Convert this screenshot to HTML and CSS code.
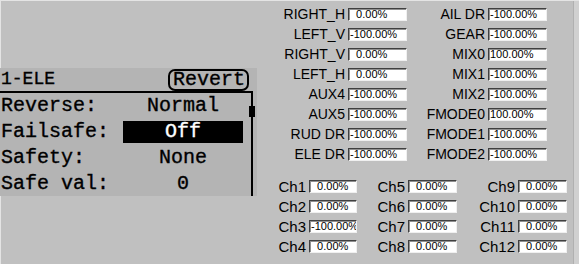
FILE: index.html
```html
<!DOCTYPE html>
<html>
<head>
<meta charset="utf-8">
<link rel="stylesheet" href="styles.css">
</head>
<body>
<div class="frame">
  <div class="left">
    <div class="lcd">
      <div class="lcd-head">
        <span class="title">1-ELE</span>
        <span class="revert">Revert</span>
      </div>
      <div class="lcd-body">
        <div class="rows">
          <div class="row"><span class="k">Reverse:</span><span class="v">Normal</span></div>
          <div class="row"><span class="k">Failsafe:</span><span class="v sel">Off</span></div>
          <div class="row"><span class="k">Safety:</span><span class="v">None</span></div>
          <div class="row"><span class="k">Safe val:</span><span class="v">0</span></div>
        </div>
        <div class="scroll"><div class="thumb"></div></div>
      </div>
    </div>
  </div>
  <div class="right">
    <div class="inputs">
      <span class="lbl">RIGHT_H</span><span class="box">  0.00%</span><span class="lbl">AIL DR</span><span class="box">-100.00%</span>
      <span class="lbl">LEFT_V</span><span class="box">-100.00%</span><span class="lbl">GEAR</span><span class="box">-100.00%</span>
      <span class="lbl">RIGHT_V</span><span class="box">  0.00%</span><span class="lbl">MIX0</span><span class="box">100.00%</span>
      <span class="lbl">LEFT_H</span><span class="box">  0.00%</span><span class="lbl">MIX1</span><span class="box">-100.00%</span>
      <span class="lbl">AUX4</span><span class="box">-100.00%</span><span class="lbl">MIX2</span><span class="box">-100.00%</span>
      <span class="lbl">AUX5</span><span class="box">-100.00%</span><span class="lbl">FMODE0</span><span class="box">100.00%</span>
      <span class="lbl">RUD DR</span><span class="box">-100.00%</span><span class="lbl">FMODE1</span><span class="box">-100.00%</span>
      <span class="lbl">ELE DR</span><span class="box">-100.00%</span><span class="lbl">FMODE2</span><span class="box">-100.00%</span>
    </div>
    <div class="channels">
      <span class="lbl ch">Ch1</span><span class="box">  0.00%</span><span class="lbl ch">Ch5</span><span class="box">  0.00%</span><span class="lbl ch">Ch9</span><span class="box">  0.00%</span>
      <span class="lbl ch">Ch2</span><span class="box">  0.00%</span><span class="lbl ch">Ch6</span><span class="box">  0.00%</span><span class="lbl ch">Ch10</span><span class="box">  0.00%</span>
      <span class="lbl ch">Ch3</span><span class="box">-100.00%</span><span class="lbl ch">Ch7</span><span class="box">  0.00%</span><span class="lbl ch">Ch11</span><span class="box">  0.00%</span>
      <span class="lbl ch">Ch4</span><span class="box">  0.00%</span><span class="lbl ch">Ch8</span><span class="box">  0.00%</span><span class="lbl ch">Ch12</span><span class="box">  0.00%</span>
    </div>
  </div>
  <div class="edge"></div>
</div>
</body>
</html>
```
FILE: styles.css
```css
html, body {
  margin: 0;
  padding: 0;
  background: #c0c0c0;
}
.frame {
  display: flex;
  width: 579px;
  height: 264px;
  box-sizing: border-box;
  border-left: 1px solid #e4e4e4;
  border-top: 1px solid #e4e4e4;
  font-family: "Liberation Sans", Arial, sans-serif;
}
.left {
  width: 271px;
  flex: none;
}
.lcd {
  margin-top: 67px;
  margin-left: -1px;
  width: 257px;
  height: 128px;
  background: #b4b4b4;
  overflow: hidden;
  font-family: "Liberation Mono", "DejaVu Sans Mono", monospace;
  color: #000;
  -webkit-text-stroke: 0.35px #000;
}
.lcd-head {
  height: 23px;
  width: 253px;
  border-bottom: 2px solid #000;
  display: flex;
  align-items: flex-start;
  justify-content: space-between;
}
.title {
  font-size: 18px;
  line-height: 22px;
  padding-left: 1px;
}
.revert {
  font-size: 20px;
  line-height: 18px;
  height: 18px;
  margin-top: 1px;
  margin-right: 4px;
  padding: 0 2px 0 3px;
  border: 2px solid #000;
  border-radius: 7px;
}
.lcd-body {
  display: flex;
}
.rows {
  width: 251px;
}
.row {
  display: grid;
  grid-template-columns: 122px 120px;
  height: 26px;
  align-items: center;
  font-size: 20px;
  line-height: 22px;
  padding-left: 1px;
}
.v {
  text-align: center;
  height: 22px;
}
.sel {
  background: #000;
  color: #fff;
  -webkit-text-stroke: 0.35px #fff;
}
.scroll {
  position: relative;
  width: 2px;
  height: 110px;
  background: #000;
}
.thumb {
  position: absolute;
  left: -2px;
  top: 13px;
  width: 6px;
  height: 11px;
  background: #000;
}
.right {
  flex: none;
  width: 301px;
}
.inputs {
  display: grid;
  grid-template-columns: 76px 59px 81px 59px;
  grid-auto-rows: 13px;
  row-gap: 7px;
  margin-top: 7px;
}
.lbl {
  font-size: 14px;
  line-height: 13px;
  color: #000;
  text-align: right;
  padding-right: 3px;
  white-space: nowrap;
}
.box {
  box-sizing: border-box;
  height: 13px;
  background: #fff;
  border-style: solid;
  border-width: 1px;
  border-color: #404040 #f0f0f0 #f0f0f0 #404040;
  box-shadow: inset 1px 1px 0 #909090;
  font-size: 11px;
  line-height: 11px;
  padding-left: 1px;
  white-space: pre;
  overflow: hidden;
  color: #000;
}
.channels {
  display: grid;
  grid-template-columns: 37px 48px 51px 49px 61px 49px;
  grid-auto-rows: 13px;
  row-gap: 7px;
  margin-top: 19px;
}
.ch {
  font-size: 15px;
  line-height: 13px;
}
.edge {
  flex: none;
  width: 6px;
  border-left: 1px solid #b0b0b0;
  background: #d0d0d0;
}
```
